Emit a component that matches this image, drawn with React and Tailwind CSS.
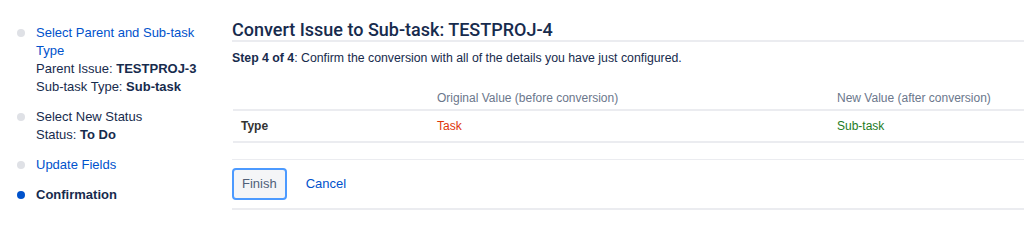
const steps = [
  {
    title: 'Select Parent and Sub-task Type',
    link: true,
    details: [
      ['Parent Issue:', 'TESTPROJ-3'],
      ['Sub-task Type:', 'Sub-task'],
    ],
  },
  {
    title: 'Select New Status',
    link: false,
    details: [['Status:', 'To Do']],
  },
  { title: 'Update Fields', link: true, details: [] },
  { title: 'Confirmation', current: true, details: [] },
];

function StepItem({ step }) {
  return (
    <li className="flex">
      <div className="w-[19px] shrink-0 pt-[5px]">
        <span
          className={`block w-[8px] h-[8px] rounded-full ${
            step.current ? 'bg-[#0052cc]' : 'bg-[#dfe1e6]'
          }`}
        />
      </div>
      <div className="w-[162px]">
        <div
          className={
            step.current
              ? 'font-bold text-[#172b4d]'
              : step.link
              ? 'text-[#0052cc]'
              : 'text-[#172b4d]'
          }
        >
          {step.title}
        </div>
        {step.details.map(([label, value]) => (
          <div key={label} className="text-[#172b4d]">
            {label} <span className="font-bold">{value}</span>
          </div>
        ))}
      </div>
    </li>
  );
}

export default function App() {
  return (
    <div className="w-[1024px] h-[240px] overflow-hidden bg-white flex font-['Liberation_Sans',Arial,sans-serif] text-[13px] leading-[18px] text-[#172b4d]">
      {/* wizard steps */}
      <aside className="w-[232px] shrink-0 pl-[17px] pt-[24px]">
        <ul className="flex flex-col gap-[12px]">
          {steps.map((s) => (
            <StepItem key={s.title} step={s} />
          ))}
        </ul>
      </aside>

      <main className="flex-1 pt-[20px]">
        <h1 className="font-['Roboto','Liberation_Sans',sans-serif] font-medium text-[18px] leading-[20px] text-[#172b4d] border-b-2 border-[#ebecf0]">
          Convert Issue to Sub-task: TESTPROJ-4
        </h1>
        <p className="mt-[8px] text-[12.3px] leading-[16px] text-[#172b4d] whitespace-nowrap">
          <span className="font-bold">Step 4 of 4</span>: Confirm the conversion with all of the details you have just configured.
        </p>

        <div className="mt-[24px] ml-[1px] w-[1000px] text-[12px]">
          <div className="grid grid-cols-[196px_400px_400px] border-b-2 border-[#ebecf0] text-[#6b778c] leading-[16px] pb-[3px]">
            <div />
            <div className="px-[8px]">Original Value (before conversion)</div>
            <div className="px-[8px]">New Value (after conversion)</div>
          </div>
          <div className="grid grid-cols-[196px_400px_400px] border-b-2 border-[#ebecf0] py-[7px] leading-[16px]">
            <div className="px-[8px] font-bold text-[#333]">Type</div>
            <div className="px-[8px] text-[#de350b]">Task</div>
            <div className="px-[8px] text-[#1e7b1e]">Sub-task</div>
          </div>
        </div>

        <div className="mt-[16px] border-t border-b-2 border-[#ebecf0] py-[8px] flex items-center gap-[9px]">
          <button className="h-[32px] px-[8px] rounded-[4px] border-2 border-[#4c9aff] bg-[#f4f5f7] text-[#505f79] text-[13px]">
            Finish
          </button>
          <a className="px-[10px] text-[#0052cc] text-[13px]">Cancel</a>
        </div>
      </main>
    </div>
  );
}
